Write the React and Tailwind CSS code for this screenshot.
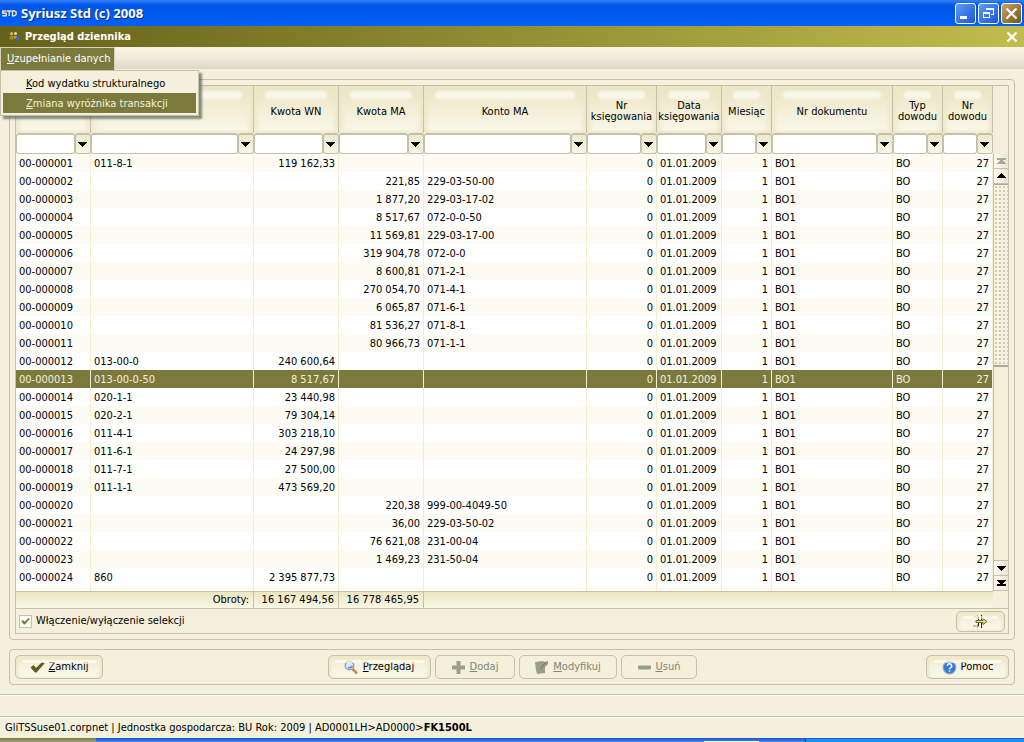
import React from "react";

const COLS = [
  { label: "", name: "Nr pozycji", w: "w-[75px]", align: "text-left" },
  { label: "", name: "Konto WN", w: "w-[163px]", align: "text-left" },
  { label: "Kwota WN", w: "w-[85px]", align: "text-right" },
  { label: "Kwota MA", w: "w-[85px]", align: "text-right" },
  { label: "Konto MA", w: "w-[163px]", align: "text-left" },
  { label: "Nr księgowania", w: "w-[70px]", align: "text-right" },
  { label: "Data księgowania", w: "w-[65px]", align: "text-left" },
  { label: "Miesiąc", w: "w-[50px]", align: "text-right" },
  { label: "Nr dokumentu", w: "w-[121px]", align: "text-left" },
  { label: "Typ dowodu", w: "w-[50px]", align: "text-left" },
  { label: "Nr dowodu", w: "w-[50px]", align: "text-right" },
];

const ENTRIES = [
  ["011-8-1", "119 162,33", "", ""],
  ["", "", "221,85", "229-03-50-00"],
  ["", "", "1 877,20", "229-03-17-02"],
  ["", "", "8 517,67", "072-0-0-50"],
  ["", "", "11 569,81", "229-03-17-00"],
  ["", "", "319 904,78", "072-0-0"],
  ["", "", "8 600,81", "071-2-1"],
  ["", "", "270 054,70", "071-4-1"],
  ["", "", "6 065,87", "071-6-1"],
  ["", "", "81 536,27", "071-8-1"],
  ["", "", "80 966,73", "071-1-1"],
  ["013-00-0", "240 600,64", "", ""],
  ["013-00-0-50", "8 517,67", "", ""],
  ["020-1-1", "23 440,98", "", ""],
  ["020-2-1", "79 304,14", "", ""],
  ["011-4-1", "303 218,10", "", ""],
  ["011-6-1", "24 297,98", "", ""],
  ["011-7-1", "27 500,00", "", ""],
  ["011-1-1", "473 569,20", "", ""],
  ["", "", "220,38", "999-00-4049-50"],
  ["", "", "36,00", "229-03-50-02"],
  ["", "", "76 621,08", "231-00-04"],
  ["", "", "1 469,23", "231-50-04"],
  ["860", "2 395 877,73", "", ""],
];

const ROWS = ENTRIES.map((e, i) => [
  "00-" + String(i + 1).padStart(6, "0"),
  ...e,
  "0",
  "01.01.2009",
  "1",
  "BO1",
  "BO",
  "27",
]);

const SELECTED = 12;

function Arrow({ up, bar, className = "text-black" }) {
  return (
    <svg width="9" height="8" viewBox="0 0 9 8" className={className} fill="currentColor" shapeRendering="crispEdges" aria-hidden="true">
      <g transform={up ? "rotate(180 4.5 4)" : undefined}>
        <path d={bar ? "M0 1h9v1h-9zM1 2h7v1h-7zM2 3h5v1h-5zM3 4h3v1h-3zM0 5h9v2h-9z" : "M0 2h9v1h-9zM1 3h7v1h-7zM2 4h5v1h-5zM3 5h3v1h-3zM4 6h1v1h-1z"} />
      </g>
    </svg>
  );
}

function CheckIcon({ size = 15, color = "#5c5c22" }) {
  return (
    <svg width={size} height={size} viewBox="0 0 15 15" aria-hidden="true">
      <path d="M.5 7.5 3.5 5 6 8 12.500 1.500 14.500 3.500 6.500 12.500H5z" fill={color} />
    </svg>
  );
}

function PushButton({ children, disabled, className }) {
  return (
    <button
      type="button"
      disabled={disabled}
      className={
        "relative flex items-center justify-center gap-1 rounded-[5px] border border-[#c4c0ac] whitespace-nowrap " +
        (disabled
          ? "bg-[#f5f0dc] text-[#7f8672] "
          : "bg-linear-to-b from-[#efe8c4] via-[#f7f3e0] to-[#faf8ea] text-black shadow-[inset_2px_0_3px_#efe8c8,inset_-2px_0_3px_#efe8c8] ") +
        className
      }
    >
      {!disabled && <span className="absolute inset-x-1.5 top-1 h-[3px] rounded-full bg-white/60" />}
      {children}
    </button>
  );
}

function CaptionButton({ label, className, children }) {
  return (
    <button type="button" aria-label={label} className={"flex size-[21px] items-center justify-center rounded-[3px] border border-white " + className}>
      {children}
    </button>
  );
}

function ScrollButton({ label, children }) {
  return (
    <button type="button" aria-label={label} className="flex h-[15px] w-full shrink-0 items-center justify-center border-b border-[#c4c0ac] bg-linear-to-r from-[#fdfcf4] to-[#ebe6d0]">
      {children}
    </button>
  );
}

function TitleBar() {
  return (
    <header>
      <div className="flex h-[26px] items-center bg-linear-to-b from-[#2f83f5] via-[#0055e6] via-20% to-[#0060f8] px-[2px]">
        <svg width="15" height="7" viewBox="0 0 15 7" fill="none" stroke="#ece5b8" strokeWidth="1.400" aria-hidden="true">
          <path d="M4.500 1H.8v2.300h3.400v2.400H.3M5 1h4.500M7.200 1v5M10.500 1h2l1.600 1v2.500l-1.600 1.200h-2z" />
        </svg>
        <h1 className="ml-1 flex-1 font-['Noto_Sans','Open_Sans',sans-serif] text-[13px] leading-4 font-bold text-white [text-shadow:1px_1px_0_#0a2f8a]">
          Syriusz Std (c) 2008
        </h1>
        <div className="flex gap-[2px]">
          <CaptionButton label="Minimalizuj" className="bg-linear-to-br from-[#5f9bf7] to-[#1a53d8]">
            <svg width="15" height="15" viewBox="0 0 15 15" aria-hidden="true"><path d="M2 10h7v3H2z" fill="#fff" /></svg>
          </CaptionButton>
          <CaptionButton label="Przywróć" className="bg-linear-to-br from-[#5f9bf7] to-[#1a53d8]">
            <svg width="15" height="15" viewBox="0 0 15 15" fill="none" stroke="#fff" shapeRendering="crispEdges" aria-hidden="true">
              <path d="M5.500 4V2.500h7v6H10M5 3h8M2.500 6.500h6v5h-6zM2 7h7" />
            </svg>
          </CaptionButton>
          <CaptionButton label="Zamknij program" className="bg-linear-to-br from-[#d2a06a] to-[#6d5a10]">
            <svg width="15" height="15" viewBox="0 0 15 15" stroke="#fff" strokeWidth="2.200" aria-hidden="true"><path d="M2.500 2.500l10 10M12.500 2.500l-10 10" /></svg>
          </CaptionButton>
        </div>
      </div>
      <div className="flex h-[21px] items-center bg-linear-to-r from-[#66621a] to-[#bfbd4d] pr-[6px] pl-[9px] text-white">
        <svg width="11" height="11" viewBox="0 0 11 11" aria-hidden="true">
          <circle cx="2.500" cy="2.500" r="1.500" fill="#d8c070" /><path d="M0 8l2-4 3 1-1 4z" fill="#a08a30" />
          <circle cx="6.500" cy="2.500" r="1.600" fill="#ecd890" /><path d="M5 5h3l1 3H5z" fill="#b89a48" />
          <circle cx="8.500" cy="7.500" r="2" fill="#2c6be0" />
        </svg>
        <h2 className="ml-[5px] flex-1 font-bold">Przegląd dziennika</h2>
        <button type="button" aria-label="Zamknij okno">
          <svg width="12" height="12" viewBox="0 0 12 12" stroke="#fff" strokeWidth="2.200" aria-hidden="true"><path d="M1.500 1.500l9 9M10.500 1.500l-9 9" /></svg>
        </button>
      </div>
    </header>
  );
}

function MenuBar() {
  return (
    <nav className="relative z-10 flex h-[22px] bg-linear-to-b from-[#f7f3e3] via-[#f1ebd8] to-[#dcd8c4]">
      <button type="button" className="h-[23px] border-t border-r border-l border-[#d8d3b8] bg-[#7b7a3c] pr-1 pl-[6px] text-white">
        <u>U</u>zupełnianie danych
      </button>
      <div role="menu" className="absolute top-[23px] left-0 w-[199px] border border-[#c4c0ac] bg-[#f5f0dc] p-[2px] shadow-[3px_3px_2px_#4a5a4aaa]">
        <button type="button" role="menuitem" className="block h-5 w-full pt-px pl-[23px] text-left">
          <u>K</u>od wydatku strukturalnego
        </button>
        <button type="button" role="menuitem" className="block h-5 w-full bg-[#7b7a3c] pt-px pl-[23px] text-left text-[#f5f0dc]">
          <u>Z</u>miana wyróżnika transakcji
        </button>
      </div>
    </nav>
  );
}

function Journal() {
  return (
    <div className="flex">
      <table className="w-full table-fixed border-separate border-spacing-0">
        <colgroup>
          {COLS.map((c, i) => <col key={i} className={c.w} />)}
        </colgroup>
        <thead>
          <tr>
            {COLS.map((c, i) => (
              <th key={i} className="relative h-[47px] border-r border-[#c4c0ac] bg-linear-to-b from-[#ebe5c2] via-[#f3eed6] to-[#faf8ea] px-0 pt-[3px] pb-0 text-center leading-[11px] font-normal shadow-[inset_3px_0_5px_#ede7c8,inset_-3px_0_5px_#ede7c8]">
                <span className="absolute inset-x-[11px] top-[5px] h-2 rounded-full bg-white/60 blur-[1px]" />
                <span className="relative">{c.label}</span>
              </th>
            ))}
          </tr>
          <tr>
            {COLS.map((c, i) => (
              <th key={i} className="p-0 font-normal">
                <div className="flex h-[21px]">
                  <input type="text" aria-label={"Filtr " + (c.label || c.name)} className="min-w-0 flex-1 rounded-[3px] border border-t-2 border-[#c4c0ac] bg-white px-1" />
                  <button type="button" aria-label={"Rozwiń " + (c.label || c.name)} className="flex w-4 items-center justify-start rounded-[3px] border border-t-2 border-[#c4c0ac] bg-linear-to-b from-[#efe9cc] to-[#f8f5e4] pl-[2px]">
                    <Arrow />
                  </button>
                </div>
              </th>
            ))}
          </tr>
        </thead>
        <tbody>
          {ROWS.map((row, r) => (
            <tr key={r} className={r === SELECTED ? "bg-[#7b7a3c] text-[#f5f0dc]" : r % 2 ? "bg-white" : "bg-[#fcfbf4]"}>
              {row.map((v, c) => (
                <td key={c} className={"h-[18px] overflow-hidden border-r border-[#f3edd3] px-[3px] pt-[2px] pb-0 leading-4 whitespace-nowrap " + COLS[c].align}>
                  {v}
                </td>
              ))}
            </tr>
          ))}
          <tr className="bg-[#fcfbf4]">
            {COLS.map((c, i) => <td key={i} className="h-[5px] border-r border-[#f3edd3] p-0" />)}
          </tr>
        </tbody>
        <tfoot>
          <tr className="bg-linear-to-b from-[#ebe5be] to-[#faf8e6] text-right leading-4">
            <td colSpan={2} className="h-[17px] border-t border-r border-[#c4c0ac] py-0 pr-1">Obroty:</td>
            <td className="border-t border-r border-[#c4c0ac] py-0 pr-1 whitespace-nowrap">16 167 494,56</td>
            <td className="border-t border-r border-[#c4c0ac] py-0 pr-1 whitespace-nowrap">16 778 465,95</td>
            <td colSpan={7} className="border-t border-[#c4c0ac] p-0" />
          </tr>
        </tfoot>
      </table>
      <div className="flex w-[15px] shrink-0 flex-col pt-[68px] pb-[17px]">
        <div className="flex flex-1 flex-col border-l border-[#c4c0ac] bg-[#f5f0dc]">
          <ScrollButton label="Początek"><Arrow up bar className="text-[#aaa797]" /></ScrollButton>
          <ScrollButton label="W górę"><Arrow up /></ScrollButton>
          <div className="h-[183px] border-t border-b-2 border-[#aaa797] bg-[#f6f2e2] bg-[radial-gradient(#cfcbb8_1px,transparent_1px)] bg-size-[4px_4px]" />
          <div className="flex-1 border-b border-[#c4c0ac]" />
          <ScrollButton label="W dół"><Arrow /></ScrollButton>
          <ScrollButton label="Koniec"><Arrow bar /></ScrollButton>
        </div>
      </div>
    </div>
  );
}

export default function App() {
  return (
    <div className="bg-[#f5f0dc] font-['DejaVu_Sans_Condensed','DejaVu_Sans',sans-serif] text-[11px] leading-[14px] text-black">
      <TitleBar />
      <MenuBar />
      <main className="px-[9px] pt-[10px]">
        <section className="rounded-[4px] border border-[#c4c0ac] p-[5px]">
          <div className="border border-[#c4c0ac]">
            <Journal />
            <div className="flex h-[25px] items-center justify-between border-t border-[#c4c0ac] px-[3px]">
              <label className="flex items-center gap-1">
                <span className="relative flex size-[13px]">
                  <input type="checkbox" defaultChecked className="size-[13px] appearance-none border border-[#c4c0ac] bg-[#fcfbf4]" />
                  <span className="pointer-events-none absolute inset-0 flex items-center justify-center"><CheckIcon size={9} color="#7b7a3c" /></span>
                </span>
                Włączenie/wyłączenie selekcji
              </label>
              <PushButton className="h-[21px] w-[49px]">
                <svg width="15" height="13" viewBox="0 0 15 13" fill="none" aria-hidden="true">
                  <path d="M0 2h5M0 11h5M4 .5l2 1.500-2 1.500M4 9.500L6 11l-2 1.500" stroke="#b08858" />
                  <path d="M5.500 2v9M8.500 0v13" stroke="#222" />
                  <path d="M3 5.500h7V3.500l4 3-4 3V7.500H3z" fill="#e8e09a" stroke="#6a6a1c" />
                </svg>
              </PushButton>
            </div>
          </div>
        </section>
        <section className="mt-[9px] grid h-9 grid-cols-[1fr_auto_1fr] items-center rounded-[4px] border border-[#c4c0ac] px-[5px]">
          <PushButton className="h-6 w-[88px] justify-self-start"><CheckIcon /><span><u>Z</u>amknij</span></PushButton>
          <div className="flex gap-1">
            <PushButton className="h-6 w-[103px]">
              <svg width="15" height="15" viewBox="0 0 15 15" aria-hidden="true">
                <path d="M8.500 9l4.500 4.500" stroke="#d08a3c" strokeWidth="2.500" />
                <circle cx="5.500" cy="5.500" r="4.300" fill="#d8e8f8" stroke="#9aa0aa" strokeWidth="1.400" />
                <path d="M4 7.500A4 4 0 0 0 8.500 6" stroke="#4a8ae0" strokeWidth="1.500" fill="none" />
              </svg>
              <span><u>P</u>rzeglądaj</span>
            </PushButton>
            <PushButton disabled className="h-6 w-[80px]">
              <svg width="15" height="15" viewBox="0 0 15 15" aria-hidden="true"><path d="M5.500 1h4v4.500H14v4H9.500V14h-4V9.500H1v-4h4.500z" fill="#9a9f8c" /></svg>
              <span><u>D</u>odaj</span>
            </PushButton>
            <PushButton disabled className="h-6 w-[98px]">
              <svg width="15" height="15" viewBox="0 0 15 15" aria-hidden="true"><path d="M1 2l8-1 1 1 4-1v3l-3 3v6l-8 1-1-4z" fill="#9a9f8c" /><path d="M7 9l1-2.500 4-4" stroke="#7f8474" strokeWidth="1.500" fill="none" /></svg>
              <span><u>M</u>odyfikuj</span>
            </PushButton>
            <PushButton disabled className="h-6 w-[76px]">
              <svg width="15" height="15" viewBox="0 0 15 15" aria-hidden="true"><rect x="1" y="5.500" width="13" height="4" rx="1" fill="#9a9f8c" /></svg>
              <span><u>U</u>suń</span>
            </PushButton>
          </div>
          <PushButton className="h-6 w-[83px] justify-self-end">
            <svg width="15" height="15" viewBox="0 0 15 15" fill="none" aria-hidden="true">
              <circle cx="7.500" cy="7.500" r="6.300" fill="#2f7be0" stroke="#9aa4b0" strokeWidth="1.200" />
              <path d="M5.300 6a2.200 2.200 0 1 1 3.300 1.800q-1.100.6-1.100 1.400M7.500 10.200v1.500" stroke="#fff" strokeWidth="1.500" />
            </svg>
            <span>Pomoc</span>
          </PushButton>
        </section>
      </main>
      <div className="mt-[9px] h-[22px] border-t border-[#c4c0ac] shadow-[inset_0_1px_0_#fff]" />
      <footer>
        <p className="flex h-[22px] items-center border-t border-[#c4c0ac] px-[5px] shadow-[inset_0_1px_0_#fff]">
          <span className="whitespace-pre">GliTSSuse01.corpnet | Jednostka gospodarcza: BU Rok: 2009 | AD0001LH&gt;AD0000&gt;<b>FK1500L</b></span>
        </p>
        <div className="flex h-1 items-end bg-linear-to-b from-[#1c50c8] to-[#3f8cf0]">
          <div className="h-1 w-[96px] bg-linear-to-b from-[#7a7a3a] to-[#a0a080]" />
          <div className="flex-1" />
          <div className="h-px w-[55px] bg-white" />
          <div className="w-[46px]" />
          <div className="h-[3px] w-[219px] border-l border-[#103080] bg-[#1a90f0]" />
        </div>
      </footer>
    </div>
  );
}
